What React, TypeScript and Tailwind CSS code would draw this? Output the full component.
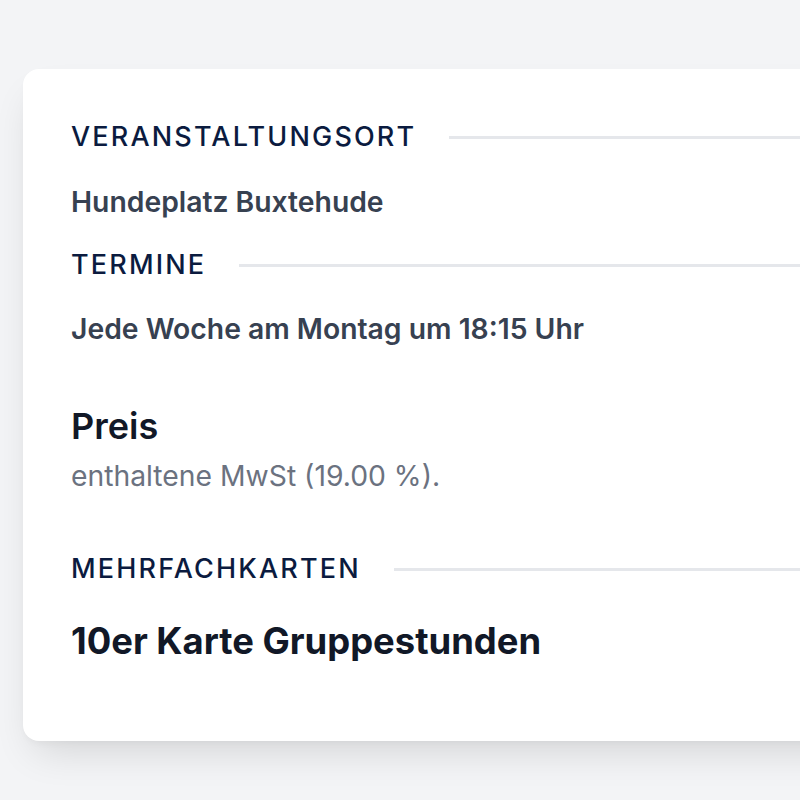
import React from "react";

function SectionLabel({ title }: { title: string }) {
  return (
    <div className="flex items-center gap-[33px]">
      <span className="shrink-0 text-[27px] leading-[36px] font-medium uppercase tracking-[0.08em] text-[#0b1b3f]">
        {title}
      </span>
      <div className="h-[3px] flex-1 bg-[#e5e7eb]" />
    </div>
  );
}

export default function App() {
  return (
    <div
      className="min-h-[800px] w-[800px] overflow-hidden bg-[#f3f4f6] pt-[69px] pl-[23px]"
      style={{ fontFamily: "Inter, 'Noto Sans', sans-serif" }}
    >
      <div className="w-[840px] rounded-2xl bg-white pl-[48px] pt-[50px] pb-[78px] shadow-[0_20px_40px_-12px_rgba(0,0,0,0.14),0_4px_10px_-4px_rgba(0,0,0,0.06)]">
        <SectionLabel title="Veranstaltungsort" />
        <p className="mt-[29px] text-[28.3px] leading-[36px] font-semibold text-[#374151]">
          Hundeplatz Buxtehude
        </p>

        <div className="mt-[27px]">
          <SectionLabel title="Termine" />
        </div>
        <p className="mt-[28px] text-[28.3px] leading-[36px] font-semibold text-[#374151]">
          Jede Woche am Montag um 18:15 Uhr
        </p>

        <h2 className="mt-[57px] text-[36px] leading-[44px] font-semibold text-[#111827]">
          Preis
        </h2>
        <p className="mt-[10px] text-[28.3px] leading-[36px] text-[#6b7280]">
          enthaltene MwSt (19.00 %).
        </p>

        <div className="mt-[57px]">
          <SectionLabel title="Mehrfachkarten" />
        </div>
        <h3 className="mt-[32px] text-[36.4px] leading-[44px] font-bold text-[#111827]">
          10er Karte Gruppestunden
        </h3>
      </div>
    </div>
  );
}
